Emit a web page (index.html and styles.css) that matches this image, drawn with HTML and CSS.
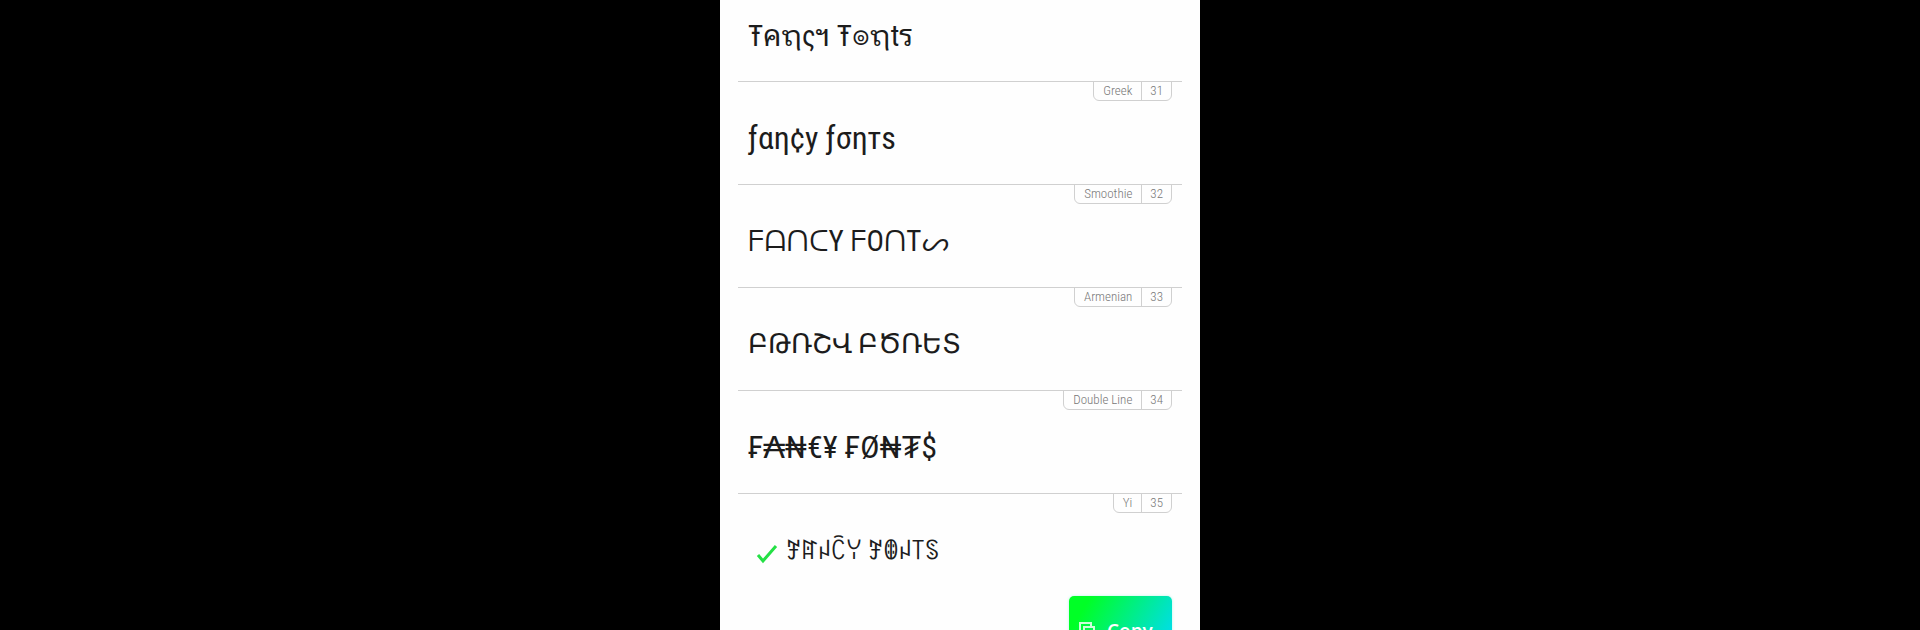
FILE: index.html
```html
<!DOCTYPE html>
<html lang="en">
<head>
    <meta charset="UTF-8">
    <meta name="viewport" content="width=device-width, initial-scale=1.0">
    <title>Fancy Fonts</title>
    <link rel="stylesheet" href="styles.css">
</head>
<body>
    <main class="app">
        <ul class="font-list">
            <li class="font-item">
                <span class="font-text medium">Ŧคຖςฯ Ŧ๏ຖtร</span>
            </li>
            <li class="font-item">
                <div class="font-tag"><span class="tag-name">Greek</span><span class="tag-number">31</span></div>
                <span class="font-text">ƒαη¢у ƒσηтѕ</span>
            </li>
            <li class="font-item">
                <div class="font-tag"><span class="tag-name">Smoothie</span><span class="tag-number">32</span></div>
                <span class="font-text medium">ᖴᗩᑎᑕY ᖴOᑎTᔕ</span>
            </li>
            <li class="font-item">
                <div class="font-tag"><span class="tag-name">Armenian</span><span class="tag-number">33</span></div>
                <span class="font-text small">ԲԹՌՇՎ ԲԾՌԵՏ</span>
            </li>
            <li class="font-item">
                <div class="font-tag"><span class="tag-name">Double Line</span><span class="tag-number">34</span></div>
                <span class="font-text">₣₳₦€¥ ₣Ø₦₮$</span>
            </li>
            <li class="font-item">
                <div class="font-tag"><span class="tag-name">Yi</span><span class="tag-number">35</span></div>
                <svg class="check" viewBox="0 0 22 20" aria-hidden="true">
                    <path d="M2 11 L7 17 L20 2"/>
                </svg>
                <span class="font-text small bold">ꎇꍏꈤꉓꌩ ꎇꂦꈤ꓄ꌗ</span>
            </li>
        </ul>

        <button class="copy-button" type="button">
            <svg class="copy-icon" viewBox="0 0 16 18" aria-hidden="true">
                <path d="M1 13V1H12V4"/>
                <rect x="5" y="5" width="10" height="12"/>
            </svg>
            Copy
        </button>
    </main>
</body>
</html>
```
FILE: styles.css
```css
* {
    margin: 0;
    padding: 0;
    box-sizing: border-box;
}

body {
    font-family: "Roboto Condensed", Roboto, "Noto Sans Thai Looped", "Noto Looped Thai", "Noto Sans Lao Looped", "Noto Looped Lao", "Noto Sans Canadian Aboriginal", "Noto Sans Yi", sans-serif;
    background: #000;
    color: #1c1c1c;
    height: 100vh;
    overflow: hidden;
}

.app {
    width: 25%;
    min-width: 320px;
    min-height: 100vh;
    margin: 0 auto;
    padding: 0 18px;
    background: #fefefe;
    display: flex;
    flex-direction: column;
}

.font-list {
    list-style: none;
}

.font-item {
    position: relative;
    display: flex;
    align-items: center;
    height: 103px;
    padding: 10px 10px 0;
    border-top: 1px solid #d0d0d0;
}

.font-item:first-child {
    height: 81px;
    padding: 0 10px 10px;
    border-top: none;
}

.font-text {
    font-size: 32px;
    line-height: 40px;
    white-space: nowrap;
}

.font-text.medium {
    font-size: 29px;
}

.font-text.small {
    font-size: 27px;
}

.font-text.bold {
    font-weight: 600;
}

.font-tag {
    position: absolute;
    top: -1px;
    right: 10px;
    display: flex;
    border: 1px solid #d0d0d0;
    border-radius: 0 0 6px 6px;
    color: #777;
    font-size: 13px;
    font-weight: 300;
    line-height: 18px;
}

.tag-name {
    padding: 0 9px;
}

.tag-number {
    padding: 0 8px;
    border-left: 1px solid #d0d0d0;
}

.check {
    width: 22px;
    height: 20px;
    margin: 8px 8px 0;
    fill: none;
    stroke: #24e045;
    stroke-width: 3;
}

.copy-button {
    align-self: flex-end;
    display: flex;
    align-items: center;
    gap: 12px;
    width: 103px;
    height: 70px;
    flex-shrink: 0;
    margin-right: 10px;
    padding: 0 10px;
    border: none;
    border-radius: 5px;
    background: linear-gradient(120deg, #00ff26 15%, #00dcf0 90%);
    box-shadow: 0 0 3px rgba(0, 230, 180, 0.3);
    color: #fff;
    font-family: "Open Sans", sans-serif;
    font-size: 19px;
    font-weight: 600;
    cursor: pointer;
}

.copy-icon {
    width: 16px;
    height: 18px;
    fill: none;
    stroke: #fff;
    stroke-opacity: 0.8;
    stroke-width: 2;
}
```
